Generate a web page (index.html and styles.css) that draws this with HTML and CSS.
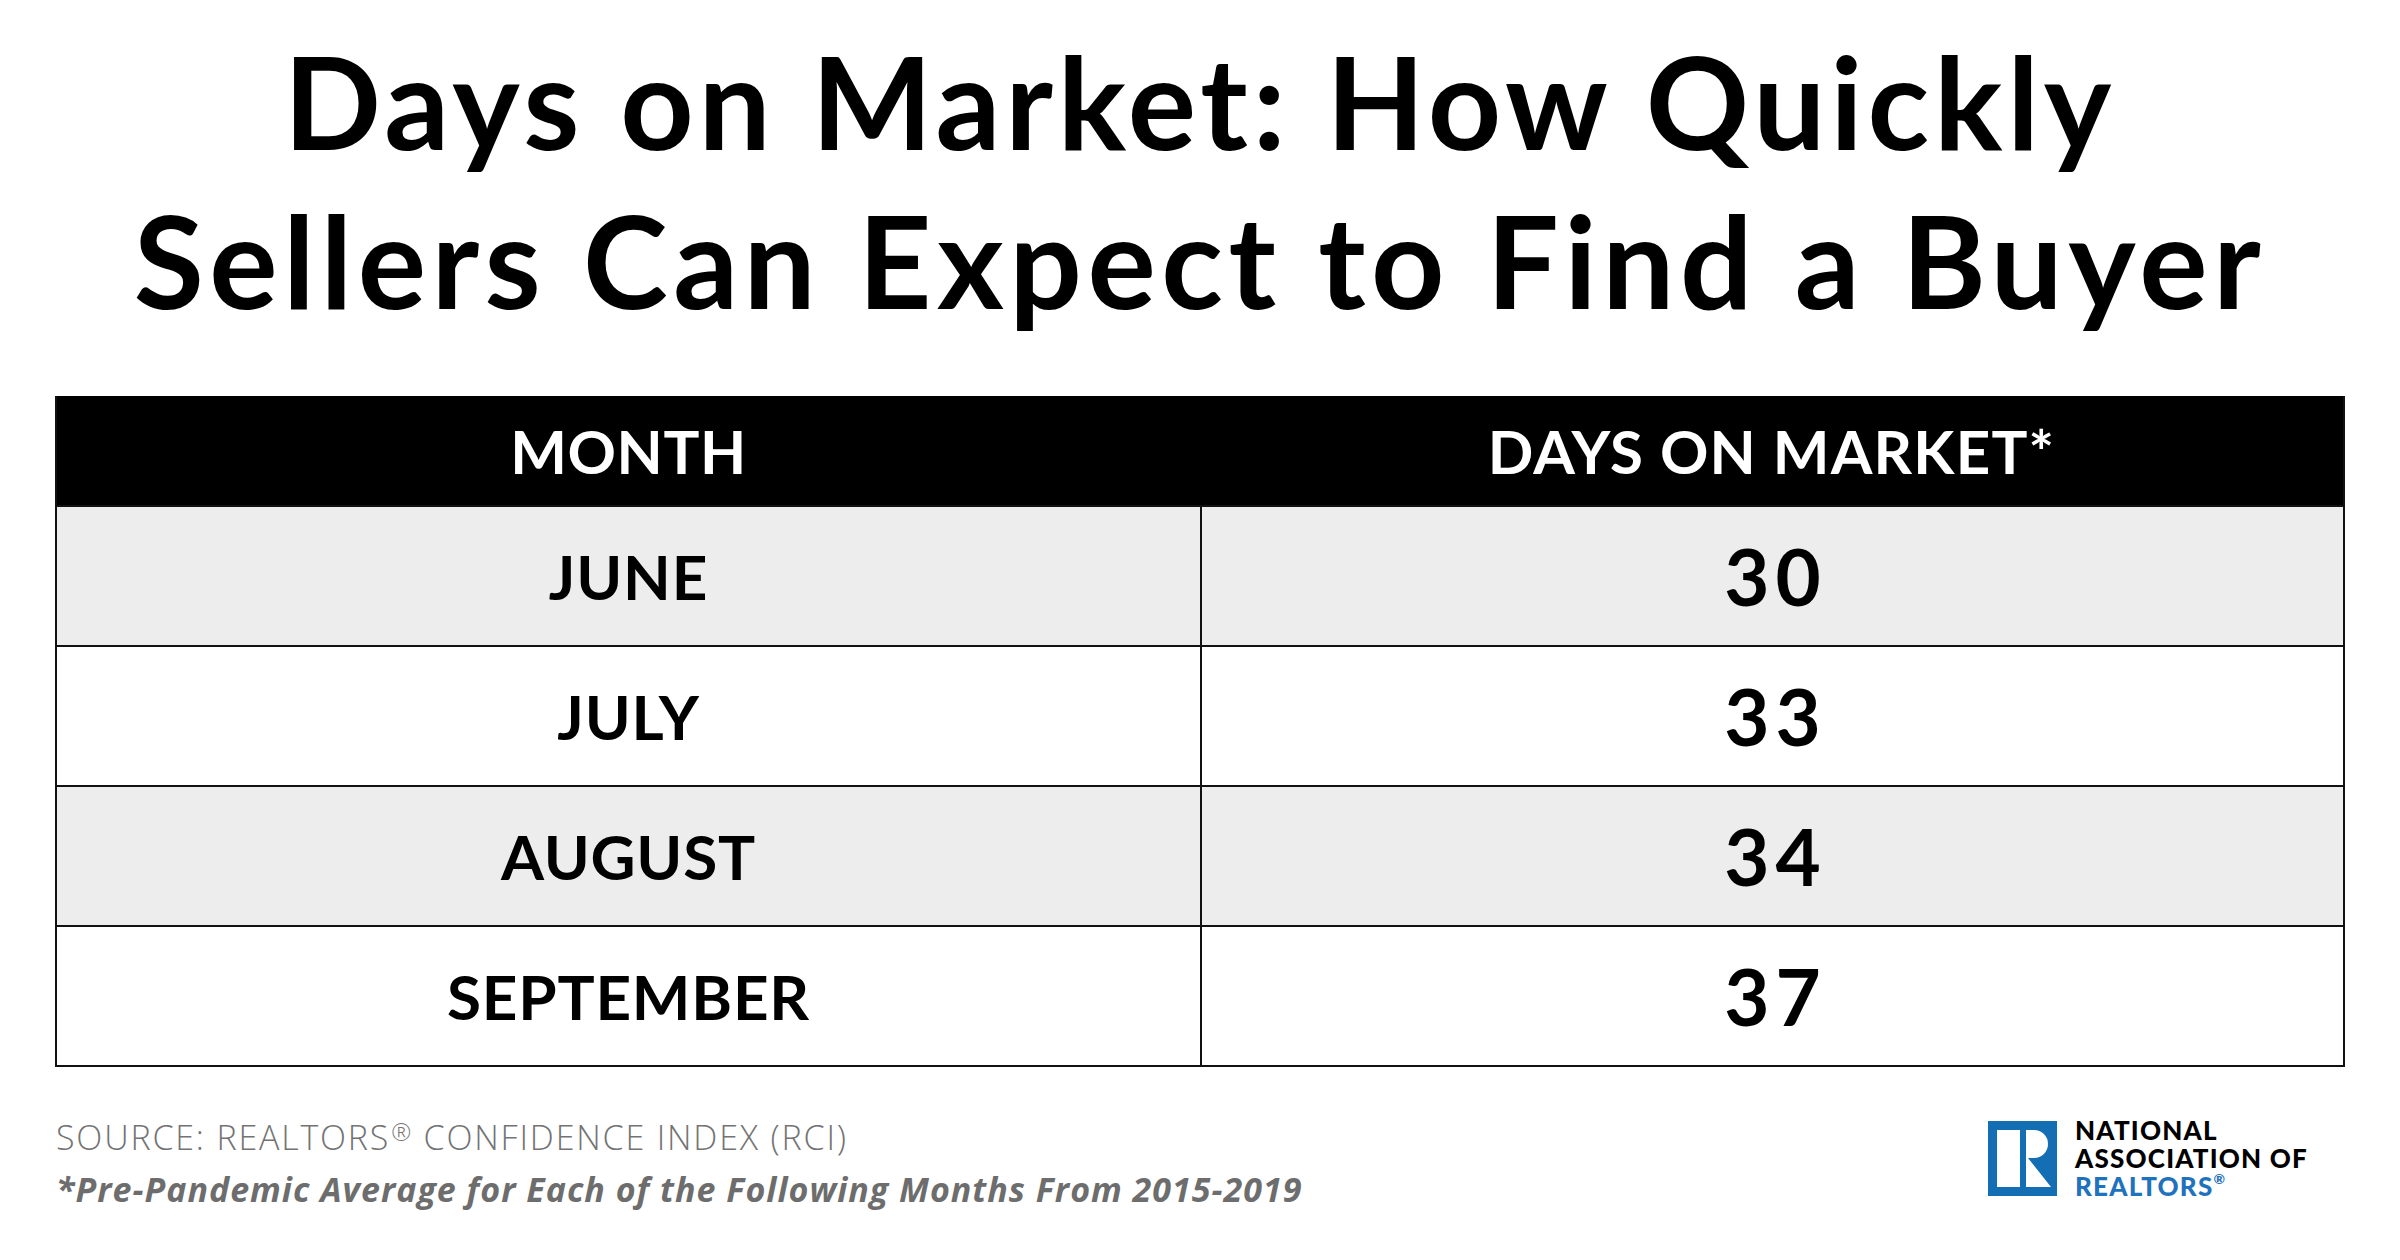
FILE: index.html
```html
<!DOCTYPE html>
<html lang="en">
<head>
<meta charset="utf-8">
<title>Days on Market</title>
<link rel="stylesheet" href="styles.css">
</head>
<body>
<div class="page">
  <h1 class="title"><span class="line1">Days on Market: How Quickly</span><br>Sellers Can Expect to Find a Buyer</h1>
  <div class="table">
    <div class="row head">
      <div class="cell">MONTH</div>
      <div class="cell">DAYS ON MARKET*</div>
    </div>
    <div class="row shaded">
      <div class="cell month">JUNE</div>
      <div class="cell num">30</div>
    </div>
    <div class="row">
      <div class="cell month">JULY</div>
      <div class="cell num">33</div>
    </div>
    <div class="row shaded">
      <div class="cell month">AUGUST</div>
      <div class="cell num">34</div>
    </div>
    <div class="row">
      <div class="cell month">SEPTEMBER</div>
      <div class="cell num">37</div>
    </div>
  </div>
  <div class="footer">
    <div class="notes">
      <div class="source">SOURCE: REALTORS<span class="reg">®</span> CONFIDENCE INDEX (RCI)</div>
      <div class="note">*Pre-Pandemic Average for Each of the Following Months From 2015-2019</div>
    </div>
    <div class="logo">
      <svg class="logo-mark" width="69" height="75" viewBox="0 0 69 75" aria-hidden="true">
        <rect x="0" y="0" width="69" height="75" fill="#146eb4"/>
        <rect x="9" y="9" width="23" height="57" fill="#fff"/>
        <path d="M38 9 H46 A14 14 0 0 1 46 37 H40 L63 66 H38 Z" fill="#fff"/>
      </svg>
      <div class="logo-text">
        <div>NATIONAL</div>
        <div>ASSOCIATION OF</div>
        <div class="blue">REALTORS<sup>®</sup></div>
      </div>
    </div>
  </div>
</div>
</body>
</html>
```
FILE: styles.css
```css
html, body {
  margin: 0;
  padding: 0;
  background: #fff;
}
*, *::before, *::after {
  box-sizing: border-box;
}
.page {
  width: 2400px;
  height: 1260px;
  overflow: hidden;
  font-family: "Lato", "Liberation Sans", sans-serif;
  color: #000;
}
.title {
  margin: 21px 0 0;
  font-size: 128px;
  line-height: 159px;
  font-weight: 700;
  text-align: center;
  letter-spacing: 5.5px;
}
.title .line1 {
  letter-spacing: 4.8px;
}
.table {
  margin: 57px 55px 0;
  border: 2px solid #111;
  border-top: none;
}
.row {
  display: grid;
  grid-template-columns: 1fr 1fr;
  height: 140px;
  border-top: 2px solid #111;
}
.row.head {
  height: 109px;
  border-top: none;
  background: #000;
  color: #fff;
}
.row.shaded {
  background: #ededed;
}
.cell {
  display: flex;
  align-items: center;
  justify-content: center;
  font-weight: 700;
}
.cell + .cell {
  border-left: 2px solid #111;
}
.head .cell {
  font-size: 60px;
  letter-spacing: 0.6px;
  border-left: none;
}
.head .cell + .cell {
  letter-spacing: 1.2px;
}
.month {
  font-size: 62px;
  letter-spacing: 0.8px;
}
.num {
  font-size: 78px;
  letter-spacing: 6px;
  text-indent: 6px;
}
.footer {
  display: flex;
  justify-content: space-between;
  align-items: flex-start;
  margin-top: 44px;
  padding: 0 92px 0 56px;
}
.notes {
  font-family: "Open Sans", "Lato", sans-serif;
  font-size: 34px;
  line-height: 52px;
}
.source {
  color: #737373;
  font-weight: 300;
  letter-spacing: 1.8px;
}
.source .reg {
  font-size: 24px;
  vertical-align: 9px;
  line-height: 0;
  margin-left: 1px;
}
.note {
  color: #6d6d6d;
  font-weight: 700;
  font-style: italic;
  letter-spacing: 1px;
}
.logo {
  display: flex;
  align-items: flex-start;
  gap: 18px;
  margin-top: 5px;
}
.logo-mark {
  display: block;
  margin-top: 5px;
}
.logo-text {
  font-size: 26px;
  line-height: 28px;
  font-weight: 900;
  letter-spacing: 1.2px;
  color: #000;
}
.logo-text .blue {
  color: #1f72bd;
}
.logo-text sup {
  font-size: 14px;
  vertical-align: top;
  line-height: 14px;
}
```
